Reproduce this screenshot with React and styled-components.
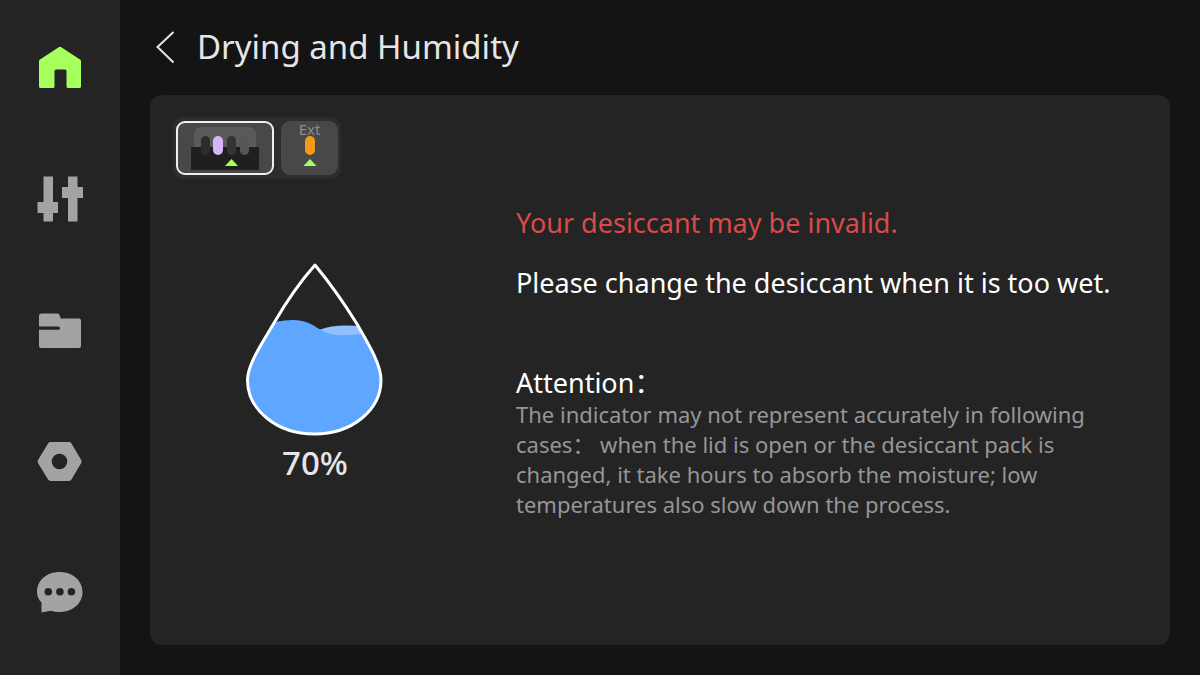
import { useState } from "react";
import styled, { createGlobalStyle } from "styled-components";

const tabs = [
	{ id: "home", label: "Home", icon: <HomeIcon /> },
	{ id: "control", label: "Control", icon: <ControlIcon /> },
	{ id: "files", label: "Files", icon: <FolderIcon /> },
	{ id: "settings", label: "Settings", icon: <NutIcon /> },
	{ id: "messages", label: "Messages", icon: <MessageIcon /> },
];

const App = () => {
	const [tab, setTab] = useState("home");
	const [source, setSource] = useState("ams");
	const humidity = 70;

	return (
		<>
			<GlobalStyle />
			<Screen>
				<SideBar>
					{tabs.map((item) => (
						<TabButton
							key={item.id}
							aria-label={item.label}
							$active={tab === item.id}
							onClick={() => setTab(item.id)}
						>
							{item.icon}
						</TabButton>
					))}
				</SideBar>
				<Main>
					<Header>
						<BackButton aria-label="Back">
							<svg width="20" height="34" viewBox="0 0 20 34" fill="none">
								<path d="M18.500 2L2.500 17L18.500 32.500" stroke="#e6e6e6" strokeWidth="2" />
							</svg>
						</BackButton>
						<h1>Drying and Humidity</h1>
					</Header>
					<Panel>
						<SourcePicker>
							<SourceButton
								aria-label="AMS"
								$wide
								$active={source === "ams"}
								onClick={() => setSource("ams")}
							>
								<AmsIcon />
							</SourceButton>
							<SourceButton
								$active={source === "ext"}
								onClick={() => setSource("ext")}
							>
								<span>Ext</span>
								<ExtIcon />
							</SourceButton>
						</SourcePicker>
						<Content>
							<Level>
								<DropIcon />
								<strong>{humidity}%</strong>
							</Level>
							<Info>
								<Warning>Your desiccant may be invalid.</Warning>
								<Message>
									Please change the desiccant when it is too wet.
								</Message>
								<h2>Attention：</h2>
								<Note>
									The indicator may not represent accurately in following
									cases： when the lid is open or the desiccant pack is changed,
									it take hours to absorb the moisture; low temperatures also
									slow down the process.
								</Note>
							</Info>
						</Content>
					</Panel>
				</Main>
			</Screen>
		</>
	);
};

export default App;

function HomeIcon() {
	return (
		<svg width="48" height="48" viewBox="0 0 48 48" fill="currentColor">
			<path d="M3 17.500Q3 16.300 4 15.600L22.700 3.200Q24 2.300 25.300 3.200L44 15.600Q45 16.300 45 17.500V42.500Q45 44 43.500 44H32Q30.500 44 30.500 42.500V27Q30.500 25.500 29 25.500H20Q18.500 25.500 18.500 27V42.500Q18.500 44 17 44H4.500Q3 44 3 42.500Z" />
		</svg>
	);
}

function ControlIcon() {
	return (
		<svg width="48" height="48" viewBox="0 0 48 48" fill="currentColor">
			<path d="M7.500 1.500H17V27H22V38H17V46.500H7.500V38H1.500V27H7.500Z" />
			<path d="M32 1.500H41.500V12H47V23H41.500V46.500H32V23H26V12H32Z" />
		</svg>
	);
}

function FolderIcon() {
	return (
		<svg width="48" height="48" viewBox="0 0 48 48" fill="currentColor">
			<path d="M3 10Q3 7.500 5.500 7.500H21.500Q23 7.500 23.500 9L24.800 12.500H43Q45 12.500 45 14.500V40Q45 42 43 42H5Q3 42 3 40V23.800H22.500Q24 23.800 24 22.300T22.500 20.500H3Z" />
		</svg>
	);
}

function NutIcon() {
	return (
		<svg width="48" height="48" viewBox="0 0 48 48" fill="currentColor">
			<path
				fillRule="evenodd"
				d="M14.500 5H33Q34.600 5 35.500 6.400L45.200 23Q46 24.500 45.200 26L35.500 42.600Q34.600 44 33 44H14.500Q13 44 12.100 42.600L2 26Q1.200 24.500 2 23L12.100 6.400Q13 5 14.500 5ZM23.500 16.700A7.800 7.800 0 1 0 23.500 32.300A7.800 7.800 0 1 0 23.500 16.700Z"
			/>
		</svg>
	);
}

function MessageIcon() {
	return (
		<svg width="48" height="48" viewBox="0 0 48 48" fill="currentColor">
			<path
				fillRule="evenodd"
				d="M23.500 4C36.500 4 46.500 12.500 46.500 24C46.500 35.500 36.500 44 23.500 44C20.300 44 17.500 43.600 15 42.700L5.500 44.500V34.500C2.500 31.500 1 28 1 24C1 12.500 10.500 4 23.500 4ZM12.300 20A3.800 3.800 0 1 0 12.300 27.600A3.800 3.800 0 1 0 12.300 20ZM23.900 20A3.800 3.800 0 1 0 23.900 27.600A3.800 3.800 0 1 0 23.900 20ZM35.400 20A3.800 3.800 0 1 0 35.400 27.600A3.800 3.800 0 1 0 35.400 20Z"
			/>
		</svg>
	);
}

function AmsIcon() {
	return (
		<svg width="68" height="44" viewBox="0 0 68 44">
			<path d="M3 22V9Q3 1 11 1H57Q65 1 65 9V22Z" fill="#5a5a5a" />
			<rect y="21" width="68" height="23" fill="#1f1f1f" />
			<rect x="10" y="10" width="9" height="19" rx="4.500" fill="#2d2d2d" />
			<rect x="22" y="10" width="10" height="19" rx="5" fill="#d4b6fb" />
			<rect x="36" y="10" width="9" height="19" rx="4.500" fill="#343434" />
			<rect x="49" y="10" width="9" height="19" rx="4.500" fill="#555555" />
			<path d="M34 40L40.500 33L47 40Z" fill="#a5ff5c" />
		</svg>
	);
}

function ExtIcon() {
	return (
		<svg width="14" height="37" viewBox="0 0 14 37">
			<rect x="2" width="10" height="19" rx="5" fill="#f39a1a" />
			<path d="M0.500 30L7 23L13.500 30Z" fill="#a5ff5c" />
		</svg>
	);
}

function DropIcon() {
	const outline =
		"M70 3C84 20 99 41 112 62C123 81 136 102 136 118C136 148 107 172 69.500 172C32 172 2.500 148 2.500 118C2.500 102 18 80 29 61C40 42 54 21 70 3Z";

	return (
		<svg width="140" height="175" viewBox="0 0 140 175">
			<defs>
				<clipPath id="drop">
					<path d={outline} />
				</clipPath>
			</defs>
			<g clipPath="url(#drop)">
				<path d="M74 68Q92 61 120 65V80H74Z" fill="#8fc0ff" />
				<path
					d="M0 70Q28 58 48 58C62 58 69 64 76 68C86 75 104 74 120 71H140V175H0Z"
					fill="#5ea6ff"
				/>
			</g>
			<path
				d={outline}
				fill="none"
				stroke="#fff"
				strokeWidth="3"
				strokeLinejoin="round"
			/>
		</svg>
	);
}

const GlobalStyle = createGlobalStyle`
	* {
		box-sizing: border-box;
	}
	body {
		margin: 0;
		background-color: #141414;
		font-family: "Noto Sans", "Noto Sans CJK SC", sans-serif;
	}
	h1, h2, p {
		margin: 0;
		font-weight: 400;
	}
	button {
		border: none;
		padding: 0;
		background: none;
		font-family: inherit;
		cursor: pointer;
	}
	svg {
		display: block;
	}
`;

const Screen = styled.div`
	display: flex;
	min-height: 100vh;
`;

const SideBar = styled.nav`
	display: flex;
	flex-direction: column;
	flex-shrink: 0;
	width: 120px;
	padding: 2px 0 18px;
	background-color: #242424;
`;

const TabButton = styled.button`
	display: flex;
	flex: 1;
	align-items: center;
	justify-content: center;
	color: ${(props) => (props.$active ? "#a5ff5c" : "#a3a3a3")};
`;

const Main = styled.main`
	display: flex;
	flex: 1;
	flex-direction: column;
	padding: 0 30px 30px;
`;

const Header = styled.header`
	display: flex;
	align-items: center;
	gap: 22px;
	height: 95px;
	padding: 0 0 2px 5px;
	h1 {
		color: #e6e6e6;
		font-size: 33px;
		line-height: 44px;
	}
`;

const BackButton = styled.button`
	display: flex;
`;

const Panel = styled.section`
	flex: 1;
	padding: 22px 0 32px;
	border-radius: 12px;
	background-color: #242424;
`;

const SourcePicker = styled.div`
	display: inline-flex;
	gap: 7px;
	margin-left: 23px;
	padding: 4px 3px;
	border-radius: 10px;
	background-color: #2d2d2d;
`;

const SourceButton = styled.button`
	display: flex;
	flex-direction: column;
	align-items: center;
	justify-content: center;
	width: ${(props) => (props.$wide ? "98px" : "57px")};
	height: 54px;
	border: 2px solid ${(props) => (props.$active ? "#f0f0f0" : "#484848")};
	border-radius: 9px;
	background-color: #484848;
	span {
		color: #8c8c8c;
		font-size: 15px;
		line-height: 13px;
	}
`;

const Content = styled.div`
	display: grid;
	grid-template-columns: 330px 1fr;
	gap: 36px;
	padding-right: 40px;
`;

const Level = styled.div`
	display: flex;
	flex-direction: column;
	align-items: center;
	padding-top: 83px;
	strong {
		color: #e6e6e6;
		font-size: 33px;
		font-weight: 500;
		line-height: 52px;
	}
`;

const Info = styled.div`
	padding-top: 24px;
	h2 {
		margin-top: 64px;
		color: #fff;
		font-size: 27px;
		line-height: 32px;
	}
`;

const Warning = styled.p`
	color: #d94a4a;
	font-size: 27px;
	line-height: 40px;
`;

const Message = styled.p`
	margin-top: 20px;
	color: #fff;
	font-size: 27px;
	line-height: 40px;
`;

const Note = styled.p`
	color: #969696;
	font-size: 22px;
	line-height: 30px;
`;
